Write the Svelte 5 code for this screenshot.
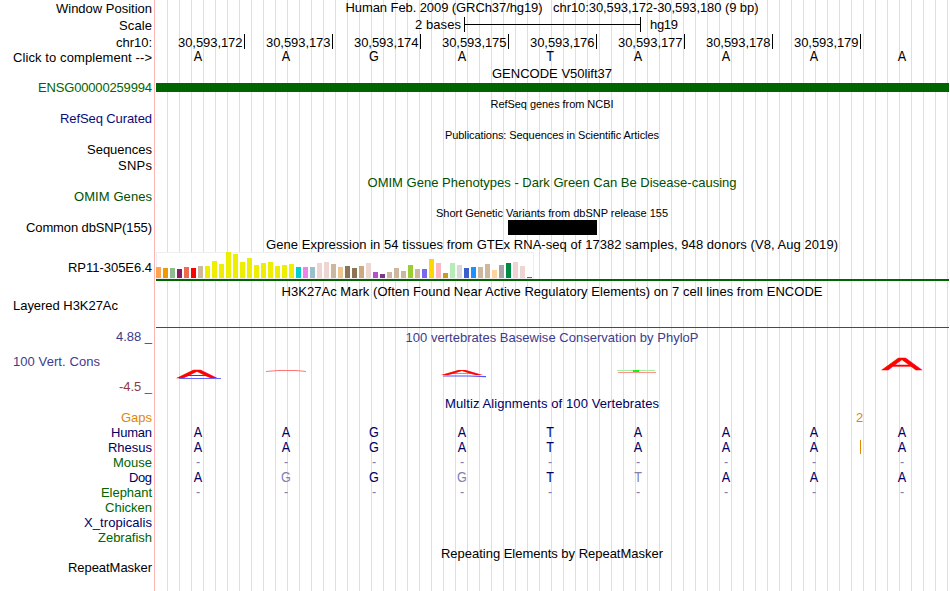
<script>
	const black = '#000';
	const navy = '#000064';
	const green = '#006400';
	const slate = '#3c3c8c';

	// x = left edge of the text, end = right edge, gap = space above the row
	const labels = [
		{ text: 'Window Position', x: 56, gap: 1 },
		{ text: 'Scale', x: 119, gap: 2 },
		{ text: 'chr10:', x: 116, gap: 2 },
		{ text: 'Click to complement -->', x: 13, gap: 0 },
		{ text: 'ENSG00000259994', x: 38, gap: 15, color: '#006400' },
		{ text: 'RefSeq Curated', x: 60, gap: 16, color: '#0c0c78' },
		{ text: 'Sequences', x: 87, gap: 16 },
		{ text: 'SNPs', x: 118, gap: 1 },
		{ text: 'OMIM Genes', x: 74, gap: 16, color: '#005000' },
		{ text: 'Common dbSNP(155)', x: 26, gap: 16 },
		{ text: 'RP11-305E6.4', x: 68, gap: 25 },
		{ text: 'Layered H3K27Ac', x: 13, end: 118, gap: 23 },
		{ text: '4.88 _', x: 116, gap: 16, color: slate },
		{ text: '100 Vert. Cons', x: 13, end: 100, gap: 10, color: slate },
		{ text: '-4.5 _', x: 119, gap: 10, color: '#8c3c3c' },
		{ text: 'Gaps', x: 121, gap: 16, color: '#e18700' },
		{ text: 'Human', x: 111, gap: 0, color: navy },
		{ text: 'Rhesus', x: 108, gap: 0, color: navy },
		{ text: 'Mouse', x: 113, gap: 0, color: green },
		{ text: 'Dog', x: 129, gap: 0, color: navy },
		{ text: 'Elephant', x: 101, gap: 0, color: green },
		{ text: 'Chicken', x: 105, gap: 0, color: green },
		{ text: 'X_tropicalis', x: 84, gap: 0, color: navy },
		{ text: 'Zebrafish', x: 98, gap: 0, color: green },
		{ text: 'RepeatMasker', x: 68, gap: 15 }
	];

	const positions = [172, 173, 174, 175, 176, 177, 178, 179];
	const sequence = 'AAGATAAAA';
	const alignments = ['AAGATAAAA', 'AAGATAAAA', '---------', 'AGGGTTAAA', '---------'];

	const heights = [
		11, 10, 10, 9, 11, 10, 12, 12, 17, 14, 26, 24, 16, 20, 13, 15, 16, 12, 13, 14, 11, 11, 11, 15, 16, 14, 11,
		12, 10, 12, 15, 6, 4, 6, 10, 7, 13, 9, 9, 19, 15, 5, 15, 13, 10, 11, 11, 14, 8, 13, 15, 16, 12, 1
	];
	const colors = [
		'#ffa54f', '#ee9a00', '#8fbc8f', '#8b1c62', '#ee6a50', '#ff0000', '#cdb79e',
		...Array(13).fill('#eeee00'),
		'#00cdcd', '#ee82ee', '#9ac0cd', '#eed5d2', '#eed5d2', '#cdb79e', '#eec591',
		'#8b7355', '#8b7355', '#cdaa7d', '#eed5d2', '#b452cd', '#7a378b', '#cdb79e', '#cdb79e', '#cdb79e',
		'#9acd32', '#cdb79e', '#7a67ee', '#ffd700', '#ffb6c1', '#cd9b1d', '#b4eeb4', '#d9d9d9', '#3a5fcd',
		'#1e90ff', '#cdb79e', '#cdb79e', '#ffd39b', '#a6a6a6', '#008b45', '#eed5d2', '#eed5d2', '#ff00ff'
	];
	const tissues = heights.map((height, i) => ({ height, color: colors[i] }));

	function shade(row, base, i) {
		if (base === '-') return 'gap';
		return base === alignments[0][i] ? 'same' : 'diff';
	}
</script>

{#snippet title(text, width, gap, color = black, size = 13, height = 15)}
	<svg class="title" {height} style:margin-top="{gap}px">
		<text x={396 - width / 2} y="12" font-size={size} fill={color} textLength={width}>{text}</text>
	</svg>
{/snippet}

<div class="browser">
	<div class="labels">
		{#each labels as { text, x, end = 152, gap, color = black }}
			<svg width="154" height="15" style:margin-top="{gap}px">
				<text {x} y="12" fill={color} textLength={end - x}>{text}</text>
			</svg>
		{/each}
	</div>

	<div class="tracks">
		{@render title('Human Feb. 2009 (GRCh37/hg19) \u00a0 chr10:30,593,172-30,593,180 (9 bp)', 413, 0)}

		<svg class="scale" height="16">
			<text x="259" y="12" textLength="46">2 bases</text>
			<path d="M308.5 0v15M308 7.5h177M484.5 0v15" stroke="#000" />
			<text x="494" y="12" textLength="28">hg19</text>
		</svg>

		<div class="ruler">
			{#each positions as pos}
				<svg width="88" height="15">
					<text x="22" y="13" textLength="64.5">30,593,{pos}</text>
				</svg>
			{/each}
		</div>

		<div class="bases">
			{#each sequence as base}<span>{base}</span>{/each}
		</div>

		{@render title('GENCODE V50lift37', 120, 2)}
		<div class="gene"></div>

		{@render title('RefSeq genes from NCBI', 123, 4, black, 11)}
		{@render title('Publications: Sequences in Scientific Articles', 214, 16, black, 11)}
		{@render title('OMIM Gene Phenotypes - Dark Green Can Be Disease-causing', 369, 33, '#005000')}
		{@render title('Short Genetic Variants from dbSNP release 155', 232, 15, black, 11)}
		<div class="variant"></div>

		{@render title('Gene Expression in 54 tissues from GTEx RNA-seq of 17382 samples, 948 donors (V8, Aug 2019)', 572, 2)}
		<div class="gtex">
			<div class="chart">
				{#each tissues as { height, color }}
					<i style:height="{height}px" style:background={color}></i>
				{/each}
			</div>
		</div>

		{@render title('H3K27Ac Mark (Often Found Near Active Regulatory Elements) on 7 cell lines from ENCODE', 541, 3)}
		<div class="layered"></div>

		{@render title('100 vertebrates Basewise Conservation by PhyloP', 293, 2, slate)}
		<svg class="phylop" height="45">
			<text class="tall" transform="translate(21 33) scale(4.6 .87)">A</text>
			<path d="M23 33.5h42" stroke="#6464ff" />
			<path d="M110 26.5l12-1h18l10 1" stroke="#ff5050" fill="none" stroke-width=".8" />
			<text class="tall" transform="translate(286 30) scale(4.6 .5)">A</text>
			<path d="M287 31h26l17 .7" stroke="#5050ff" fill="none" stroke-width="1.2" />
			<path d="M461 25.5h38" stroke="#a0f0a0" />
			<path d="M462 27.5h38" stroke="#ff9090" />
			<path d="M477 26h6" stroke="#0f0" stroke-width="2" />
			<text class="tall" transform="translate(726 24.5) scale(4.6 1.25)">A</text>
		</svg>

		{@render title('Multiz Alignments of 100 Vertebrates', 214, 6, navy, 13, 14)}
		<svg class="gaps" height="15">
			<text x="700" y="12">2</text>
		</svg>
		{#each alignments as row, r}
			<div class="bases" class:insert={r === 1}>
				{#each row as base, i}<span class={shade(row, base, i)}>{base}</span>{/each}
			</div>
		{/each}

		{@render title('Repeating Elements by RepeatMasker', 222, 46)}
	</div>
</div>

<style>
	:global(body) {
		margin: 0;
		background: #fff;
	}

	.browser {
		display: flex;
		width: 950px;
		height: 591px;
		overflow: hidden;
		font-family: "Liberation Sans", Arial, sans-serif;
		font-size: 13px;
		line-height: 15px;
	}

	svg {
		display: block;
		flex: none;
		overflow: visible;
	}

	.labels,
	.tracks {
		display: flex;
		flex-direction: column;
		flex: none;
	}

	.labels {
		width: 154px;
		border-right: 1px solid #ffb4b4;
	}

	.tracks {
		width: 793px;
		margin-left: 1px;
		background: repeating-linear-gradient(to right, transparent 0 11px, #dcdcf8 11px 12px);
	}

	.title,
	.phylop,
	.gaps,
	.scale {
		width: 793px;
	}

	.scale {
		margin-top: 2px;
	}

	.ruler {
		display: flex;
		margin-top: 1px;
		margin-left: -1px;
	}

	.ruler svg {
		border-right: 1px solid #000;
		box-sizing: content-box;
		margin-right: -1px;
	}

	.ruler svg:first-child {
		margin-left: 1px;
	}

	.bases {
		display: flex;
		height: 15px;
		margin-left: -2px;
	}

	.bases span {
		width: 88px;
		text-align: center;
		font-size: 14px;
		transform: scaleX(0.9);
	}

	.gene {
		height: 9px;
		margin-top: 2px;
		background: #006400;
	}

	.variant {
		width: 89px;
		height: 15px;
		margin-left: 352px;
		background: #000;
	}

	.gtex {
		border-bottom: 2px solid #006400;
	}

	.chart {
		display: flex;
		align-items: flex-end;
		gap: 2px;
		width: 378px;
		height: 27px;
		padding-bottom: 1px;
		box-sizing: border-box;
		background: #fff;
		box-shadow: inset 0 0 0 1px #eee;
	}

	.chart i {
		width: 5px;
	}

	.layered {
		height: 28px;
		border-bottom: 1px solid #703264;
	}

	.tall {
		font-size: 13px;
		fill: #f00;
		stroke: #f00;
		stroke-width: 0.3px;
	}

	.gaps {
		fill: #e18700;
	}

	.same {
		color: #000064;
	}

	.diff,
	.gap {
		color: #8080b4;
	}

	.insert {
		background: linear-gradient(#e18700, #e18700) 706px 0 / 1px 14px no-repeat;
	}
</style>
